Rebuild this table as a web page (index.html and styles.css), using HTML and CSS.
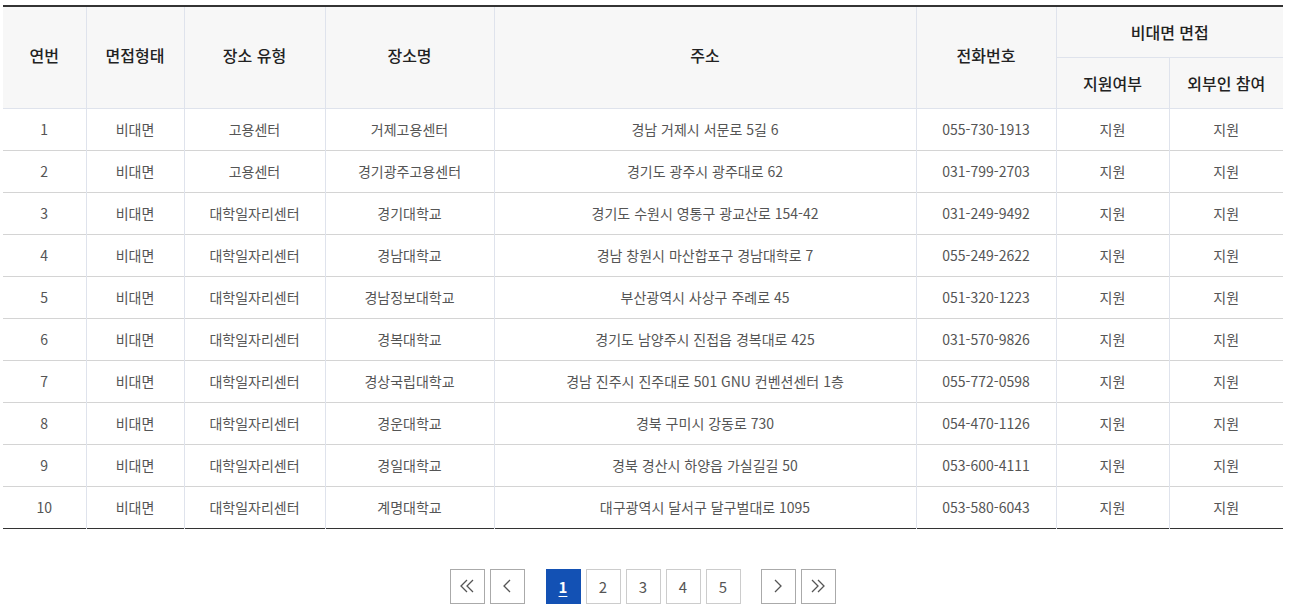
FILE: index.html
```html
<!DOCTYPE html>
<html lang="ko">
<head>
<meta charset="utf-8">
<link rel="stylesheet" href="styles.css">
</head>
<body>
<div class="wrap">
  <table class="list">
    <colgroup>
      <col class="c1"><col class="c2"><col class="c3"><col class="c4"><col class="c5"><col class="c6"><col class="c7"><col class="c8">
    </colgroup>
    <thead>
      <tr>
        <th rowspan="2">연번</th>
        <th rowspan="2">면접형태</th>
        <th rowspan="2">장소 유형</th>
        <th rowspan="2">장소명</th>
        <th rowspan="2">주소</th>
        <th rowspan="2">전화번호</th>
        <th colspan="2">비대면 면접</th>
      </tr>
      <tr>
        <th>지원여부</th>
        <th>외부인 참여</th>
      </tr>
    </thead>
    <tbody>
      <tr><td>1</td><td>비대면</td><td>고용센터</td><td>거제고용센터</td><td>경남 거제시 서문로 5길 6</td><td>055-730-1913</td><td>지원</td><td>지원</td></tr>
      <tr><td>2</td><td>비대면</td><td>고용센터</td><td>경기광주고용센터</td><td>경기도 광주시 광주대로 62</td><td>031-799-2703</td><td>지원</td><td>지원</td></tr>
      <tr><td>3</td><td>비대면</td><td>대학일자리센터</td><td>경기대학교</td><td>경기도 수원시 영통구 광교산로 154-42</td><td>031-249-9492</td><td>지원</td><td>지원</td></tr>
      <tr><td>4</td><td>비대면</td><td>대학일자리센터</td><td>경남대학교</td><td>경남 창원시 마산합포구 경남대학로 7</td><td>055-249-2622</td><td>지원</td><td>지원</td></tr>
      <tr><td>5</td><td>비대면</td><td>대학일자리센터</td><td>경남정보대학교</td><td>부산광역시 사상구 주례로 45</td><td>051-320-1223</td><td>지원</td><td>지원</td></tr>
      <tr><td>6</td><td>비대면</td><td>대학일자리센터</td><td>경복대학교</td><td>경기도 남양주시 진접읍 경복대로 425</td><td>031-570-9826</td><td>지원</td><td>지원</td></tr>
      <tr><td>7</td><td>비대면</td><td>대학일자리센터</td><td>경상국립대학교</td><td>경남 진주시 진주대로 501 GNU 컨벤션센터 1층</td><td>055-772-0598</td><td>지원</td><td>지원</td></tr>
      <tr><td>8</td><td>비대면</td><td>대학일자리센터</td><td>경운대학교</td><td>경북 구미시 강동로 730</td><td>054-470-1126</td><td>지원</td><td>지원</td></tr>
      <tr><td>9</td><td>비대면</td><td>대학일자리센터</td><td>경일대학교</td><td>경북 경산시 하양읍 가실길길 50</td><td>053-600-4111</td><td>지원</td><td>지원</td></tr>
      <tr><td>10</td><td>비대면</td><td>대학일자리센터</td><td>계명대학교</td><td>대구광역시 달서구 달구벌대로 1095</td><td>053-580-6043</td><td>지원</td><td>지원</td></tr>
    </tbody>
  </table>

  <nav class="paging">
    <div class="grp first">
      <a class="btn nav" href="#" aria-label="처음"><svg width="16" height="16" viewBox="0 0 16 16"><polyline points="8,2 2,8 8,14" /><polyline points="14,2 8,8 14,14" /></svg></a>
      <a class="btn nav" href="#" aria-label="이전"><svg width="16" height="16" viewBox="0 0 16 16"><polyline points="11,2 5,8 11,14" /></svg></a>
    </div>
    <div class="grp">
      <a class="btn num on" href="#">1</a>
      <a class="btn num" href="#">2</a>
      <a class="btn num" href="#">3</a>
      <a class="btn num" href="#">4</a>
      <a class="btn num" href="#">5</a>
    </div>
    <div class="grp">
      <a class="btn nav" href="#" aria-label="다음"><svg width="16" height="16" viewBox="0 0 16 16"><polyline points="5,2 11,8 5,14" /></svg></a>
      <a class="btn nav" href="#" aria-label="마지막"><svg width="16" height="16" viewBox="0 0 16 16"><polyline points="2,2 8,8 2,14" /><polyline points="8,2 14,8 8,14" /></svg></a>
    </div>
  </nav>
</div>
</body>
</html>
```

FILE: styles.css
```css
* { box-sizing: border-box; }
html, body { margin: 0; padding: 0; background: #fff; }
body {
  font-family: "Noto Sans CJK KR", "Noto Sans", sans-serif;
  color: #555;
}
.wrap {
  padding: 5px 18px 0 3px;
}
.list {
  width: 1280px;
  border-collapse: collapse;
  table-layout: fixed;
  border-top: 2px solid #333;
  border-bottom: 1px solid #333;
}
.c1 { width: 83px; }
.c2 { width: 98px; }
.c3 { width: 141px; }
.c4 { width: 169px; }
.c5 { width: 422px; }
.c6 { width: 140px; }
.c7 { width: 113px; }
.c8 { width: 114px; }

.list th {
  height: 51px;
  background: #f7f7f7;
  font-size: 16px;
  font-weight: 500;
  color: #222;
  border-left: 1px solid #dfe3ec;
  border-bottom: 1px solid #dfe3ec;
  padding: 0;
  text-align: center;
  vertical-align: middle;
}
.list thead tr:first-child th[rowspan] { padding-bottom: 4px; }
.list td {
  height: 42px;
  font-size: 14px;
  color: #555;
  text-align: center;
  vertical-align: middle;
  padding: 0 4px;
  border-left: 1px solid #dfe3ec;
  border-top: 1px solid #d4d4d4;
  white-space: nowrap;
}
.list tbody tr:first-child td { border-top-color: #dfe3ec; }
.list th:first-child, .list td:first-child { border-left: 0; }
.list thead tr:nth-child(2) th:first-child { border-left: 1px solid #dfe3ec; }

.paging {
  display: flex;
  justify-content: center;
  gap: 20px;
  margin-top: 40px;
  width: 1279px;
}
.grp { display: flex; gap: 5px; }
.grp.first { margin-right: 1px; }
.btn {
  width: 35px;
  height: 35px;
  display: flex;
  align-items: center;
  justify-content: center;
  text-decoration: none;
  font-size: 15px;
  color: #555;
  background: #fff;
}
.btn.nav { border: 1px solid #aaa; }
.btn.num { border: 1px solid #ccc; }
.btn.on {
  background: #1351b4;
  border-color: #1351b4;
  color: #fff;
  font-weight: 700;
  text-decoration: underline;
  text-underline-offset: 3px;
}
.btn svg polyline {
  fill: none;
  stroke: #555;
  stroke-width: 1.3;
}
```
